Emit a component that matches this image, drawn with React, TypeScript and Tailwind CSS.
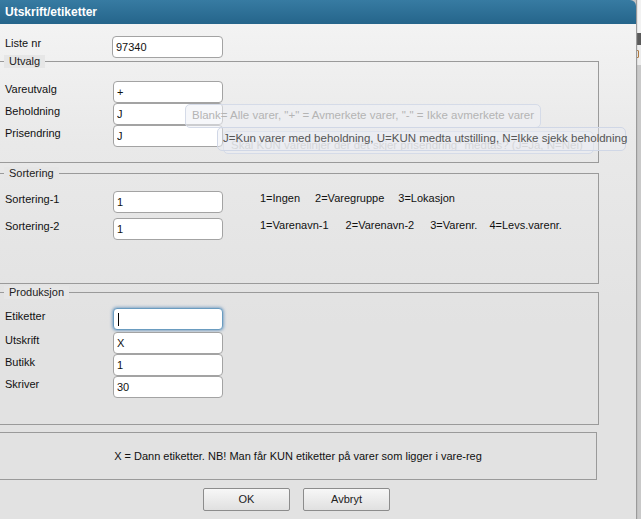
import React from "react";

const inputCls =
  "w-[110px] h-[22px] rounded-[4px] border border-[#a3a3a3] bg-white px-[3px] text-[11px] text-[#111] outline-none font-['Liberation_Sans',Arial,sans-serif]";

function Row({
  label,
  value,
  hint,
  focus,
  h = "h-[22px]",
}: {
  label: string;
  value: string;
  hint?: React.ReactNode;
  focus?: boolean;
  h?: string;
}) {
  return (
    <div className={`flex items-start ${h}`}>
      <div className="w-[113px] pl-[5px] pt-[2px] text-[11px] leading-[13px] text-[#111]">{label}</div>
      {focus ? (
        <div className="w-[110px] h-[22px] rounded-[4px] border border-[#6a9cc0] bg-white shadow-[0_0_3px_1px_rgba(90,140,185,0.7)] flex items-center pl-[4px]">
          <div className="w-[1px] h-[13px] bg-black" />
        </div>
      ) : (
        <input className={inputCls} defaultValue={value} readOnly />
      )}
      {hint}
    </div>
  );
}

function Legend({ children }: { children: React.ReactNode }) {
  return (
    <legend className="ml-[4px] px-[5px] bg-[#e6e6e6] text-[11px] leading-[13px] text-[#222]">{children}</legend>
  );
}

export default function App() {
  return (
    <div className="w-[641px] h-[519px] flex overflow-hidden bg-[#c4c4c4] font-['Liberation_Sans',Arial,sans-serif]">
      <div className="relative w-[636px] h-full flex flex-col shrink-0 shadow-[1px_0_1px_#9a9a9a]">
        <div className="h-[24px] shrink-0 rounded-tr-[6px] bg-[linear-gradient(to_bottom,#377ba2,#25658b)] pl-[5px] flex items-center text-[12px] font-bold text-white">
          Utskrift/etiketter
        </div>
        <div className="flex-1 bg-[linear-gradient(to_bottom,#f3f3f3,#e9e9e9_120px,#e2e2e2_300px)] pt-[12px]">
          <div className="flex items-start h-[21px]">
            <div className="w-[112px] pl-[5px] pt-[1px] text-[11px] leading-[13px] text-[#111]">Liste nr</div>
            <input className={inputCls + " w-[111px] h-[21px]"} defaultValue="97340" readOnly />
          </div>

          <fieldset className="-ml-[1px] mt-[-2px] w-[600px] h-[108px] border border-[#9a9a9a]">
            <Legend>Utvalg</Legend>
            <div className="pt-[13px] flex flex-col gap-0">
              <Row label="Vareutvalg" value="+" />
              <Row label="Beholdning" value="J" />
              <Row label="Prisendring" value="J" />
            </div>
          </fieldset>

          <fieldset className="-ml-[1px] mt-[4px] w-[600px] h-[117px] border border-[#9a9a9a]">
            <Legend>Sortering</Legend>
            <div className="pt-[11px] flex flex-col gap-[5px]">
              <Row
                label="Sortering-1"
                value="1"
                hint={
                  <div className="ml-[37px] pt-[1px] flex text-[11px] leading-[13px] text-[#111]">
                    <span>1=Ingen</span>
                    <span className="ml-[15px]">2=Varegruppe</span>
                    <span className="ml-[14px]">3=Lokasjon</span>
                  </div>
                }
              />
              <Row
                label="Sortering-2"
                value="1"
                hint={
                  <div className="ml-[37px] pt-[1px] flex text-[11px] leading-[13px] text-[#111]">
                    <span>1=Varenavn-1</span>
                    <span className="ml-[17px]">2=Varenavn-2</span>
                    <span className="ml-[16px]">3=Varenr.</span>
                    <span className="ml-[12px]">4=Levs.varenr.</span>
                  </div>
                }
              />
            </div>
          </fieldset>

          <fieldset className="-ml-[1px] mt-[2px] w-[600px] h-[139px] border border-[#9a9a9a]">
            <Legend>Produksjon</Legend>
            <div className="pt-[9px] flex flex-col">
              <Row label="Etiketter" value="" focus h="h-[24px]" />
              <Row label="Utskrift" value="X" />
              <Row label="Butikk" value="1" />
              <Row label="Skriver" value="30" />
            </div>
          </fieldset>

          <div className="mt-[7px] -ml-[1px] w-[598px] h-[48px] border border-[#9a9a9a] flex items-center justify-center text-[11px] text-[#111]">
            X = Dann etiketter. NB! Man får KUN etiketter på varer som ligger i vare-reg
          </div>

          <div className="mt-[8px] flex justify-center gap-[13px] w-[593px]">
            <button className="w-[87px] h-[23px] border border-[#8c8c8c] rounded-[2px] bg-[linear-gradient(to_bottom,#f7f7f7,#e0e0e0)] text-[11px] text-[#222]">
              OK
            </button>
            <button className="w-[87px] h-[23px] border border-[#8c8c8c] rounded-[2px] bg-[linear-gradient(to_bottom,#f7f7f7,#e0e0e0)] text-[11px] text-[#222]">
              Avbryt
            </button>
          </div>
        </div>

        {/* tooltips */}
        <div className="absolute left-[185px] top-[104px] w-[356px] h-[24px] rounded-[5px] border border-[#d5dbe8] bg-[rgba(238,240,246,0.55)] pl-[6px] flex items-center text-[11.5px] text-[#b4b4b4] whitespace-nowrap">
          Blank= Alle varer, "+" = Avmerkete varer, "-" = Ikke avmerkete varer
        </div>
        <div className="absolute left-[223px] top-[131px] w-[371px] h-[23px] rounded-[5px] border border-[#d5dbe8] bg-[rgba(238,240,246,0.5)] pl-[7px] flex items-center pt-[6px] text-[11.5px] text-[#c4c4c4] whitespace-nowrap overflow-hidden">
          Skal KUN varelinjer der det skjer prisendring" medtas? (J=Ja, N=Nei)
        </div>
        <div className="absolute left-[217px] top-[127px] w-[409px] h-[24px] rounded-[5px] border border-[#d0d7e6] bg-[rgba(236,238,245,0.45)] pl-[5px] flex items-center text-[11.5px] text-[#555] whitespace-nowrap">
          J=Kun varer med beholdning, U=KUN medta utstilling, N=Ikke sjekk beholdning
        </div>
      </div>

      <div className="flex-1 flex flex-col">
        <div className="h-[33px] bg-[#f2f2f2]" />
        <div className="h-[12px] bg-[#5a5a5a]" />
        <div className="h-[20px] bg-[#ededed] pt-[5px]">
          <div className="w-[3px] h-[8px] border border-[#b07a40] rounded-[1px]" />
        </div>
        <div className="flex-1 bg-[#c9c9c9]" />
      </div>
    </div>
  );
}
